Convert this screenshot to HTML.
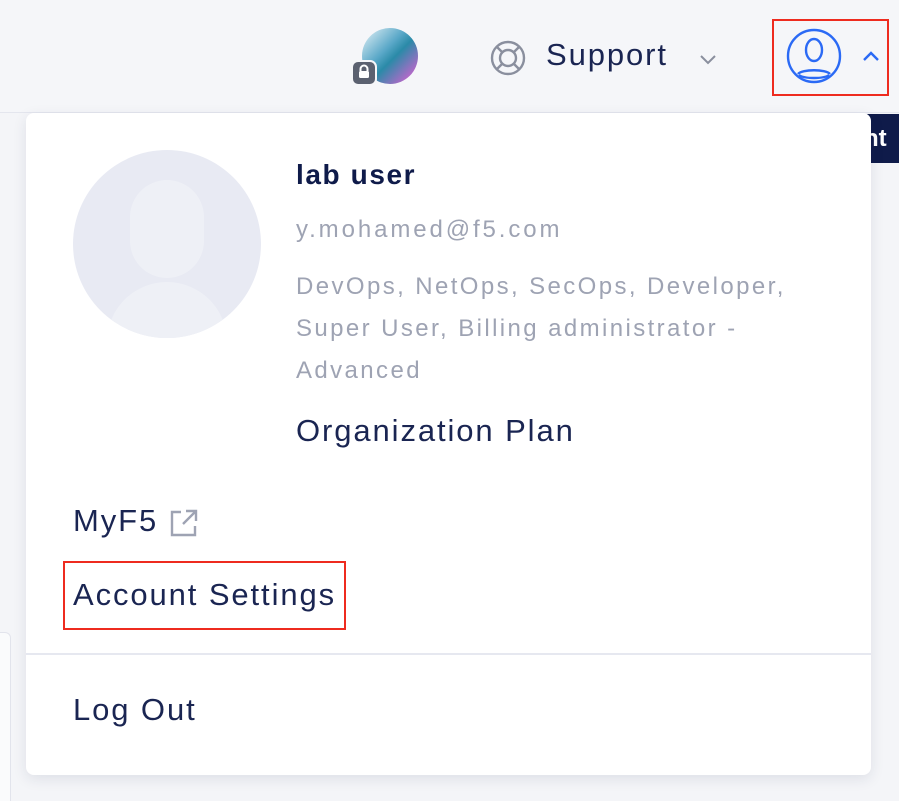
<!DOCTYPE html>
<html><head><style>
body{margin:0;width:899px;height:800px;background:#f4f5f8;font-family:"Liberation Sans",sans-serif;position:relative;overflow:hidden;color:#1a2552}
.a{position:absolute;white-space:nowrap}
.m{font-size:31px;letter-spacing:1.9px}
.g{font-size:24px;color:#9ea3b3;letter-spacing:2.4px}
</style></head><body>
<div class="a" style="left:0;top:0;width:899px;height:112px;background:#f5f6f9;border-bottom:1px solid #e4e6ee"></div>
<div class="a" style="left:0;top:632px;width:10px;height:168px;background:#fafbfc;border-right:1px solid #e2e4ec;border-top:1px solid #e2e4ec;border-top-right-radius:6px"></div>
<div class="a" style="left:362px;top:28px;width:56px;height:56px;border-radius:50%;background:linear-gradient(135deg,#e9f4f8 0%,#5aa8c8 40%,#2a8aa8 55%,#b06ac8 85%,#e05a9a 100%)"></div>
<div class="a" style="left:351px;top:60px;width:22px;height:22px;border-radius:7px;background:#5b6170;border:2px solid #f5f6f9"></div>
<svg class="a" style="left:355px;top:63px" width="18" height="18" viewBox="0 0 18 18"><path d="M5.5 8V6a3.5 3.5 0 0 1 7 0v2" stroke="#fff" stroke-width="2" fill="none"/><rect x="4" y="8" width="10" height="7" rx="1.5" fill="#fff"/></svg>
<svg class="a" style="left:488px;top:38px" width="40" height="40" viewBox="0 0 40 40" fill="none" stroke="#8a8f9e" stroke-width="2.4"><circle cx="20" cy="20" r="16"/><circle cx="20" cy="20" r="8"/><path d="M9 9l5 5M31 9l-5 5M9 31l5-5M31 31l-5-5"/></svg>
<div class="a m" style="left:546px;top:37px">Support</div>
<svg class="a" style="left:698px;top:52px" width="20" height="14" viewBox="0 0 20 14"><path d="M3 4l7 7 7-7" stroke="#8a8f9e" stroke-width="2" fill="none"/></svg>
<div class="a" style="left:772px;top:19px;width:113px;height:73px;border:2px solid #ee2b1f"></div>
<svg class="a" style="left:784px;top:26px" width="60" height="60" viewBox="0 0 60 60" fill="none" stroke="#2b6af5" stroke-width="2.4"><circle cx="30" cy="30" r="26"/><ellipse cx="30" cy="24" rx="8" ry="11"/><path d="M14 48c4-5 28-5 32 0"/><path d="M15 49c5 4 25 4 30 0"/></svg>
<svg class="a" style="left:860px;top:48px" width="22" height="16" viewBox="0 0 22 16"><path d="M4 12l7-7 7 7" stroke="#2b6af5" stroke-width="2.4" fill="none"/></svg>
<div class="a" style="left:862px;top:114px;width:37px;height:49px;background:#0f1b4a;color:#fff;font-size:24px;line-height:49px;font-weight:bold;text-indent:2px">nt</div>
<div class="a" style="left:26px;top:113px;width:845px;height:662px;background:#fff;border-radius:8px;box-shadow:0 4px 14px rgba(30,40,80,.1)"></div>
<div class="a" style="left:73px;top:150px;width:188px;height:188px;border-radius:50%;background:#e8eaf3;overflow:hidden">
 <div style="position:absolute;left:57px;top:30px;width:74px;height:98px;border-radius:37px;background:#eef0f6"></div>
 <div style="position:absolute;left:34px;top:132px;width:120px;height:80px;border-radius:60px 60px 0 0;background:#eef0f6"></div>
</div>
<div class="a" style="left:296px;top:159px;font-size:28px;font-weight:bold;color:#0f1b4a;letter-spacing:1.6px">lab user</div>
<div class="a g" style="left:296px;top:216px;letter-spacing:2.9px">y.mohamed@f5.com</div>
<div class="a g" style="left:296px;top:266px;line-height:42px;white-space:nowrap">DevOps, NetOps, SecOps, Developer,<br>Super User, Billing administrator -<br>Advanced</div>
<div class="a m" style="left:296px;top:413px">Organization Plan</div>
<div class="a m" style="left:73px;top:503px">MyF5</div>
<svg class="a" style="left:168px;top:507px" width="32" height="32" viewBox="0 0 32 32" fill="none" stroke="#9ea3b3" stroke-width="2.4"><path d="M13 5H4v23h23v-9"/><path d="M18 4h10v10M28 4L15 17"/></svg>
<div class="a" style="left:63px;top:561px;width:279px;height:65px;border:2px solid #ee2b1f"></div>
<div class="a m" style="left:73px;top:577px">Account Settings</div>
<div class="a" style="left:26px;top:653px;width:845px;height:2px;background:#e6e8f0"></div>
<div class="a m" style="left:73px;top:692px">Log Out</div>
</body></html>
